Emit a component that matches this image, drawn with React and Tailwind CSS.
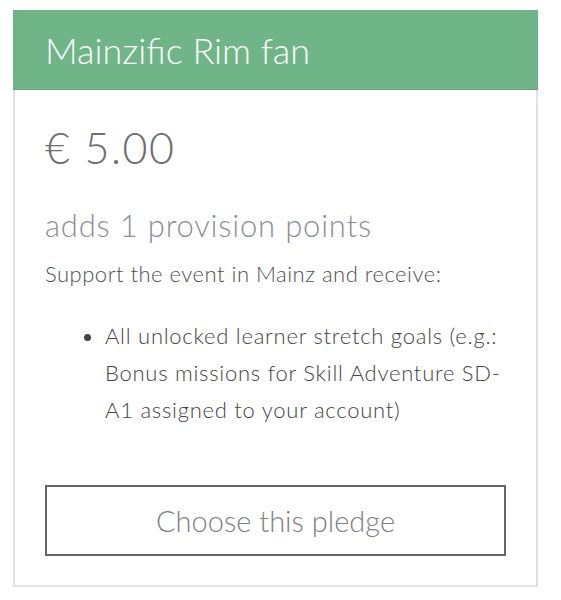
import React from "react";

const perks = [
  "All unlocked learner stretch goals (e.g.: Bonus missions for Skill Adventure SD-A1 assigned to your account)",
];

const PledgeCard = ({ title, price, points, intro, items }) => {
  return (
    <div className="w-[525px] border-2 border-[#e2e2e2] bg-white">
      <div className="-mx-[2px] -mt-[2px] h-[80px] flex items-center bg-[#6fb587] border-b border-[#62a57a] px-[32px]">
        <h2 className="text-[36px] leading-none font-light text-white">{title}</h2>
      </div>
      <div className="px-[30px] pt-[33px] pb-[29px]">
        <div className="text-[43px] leading-[50px] tracking-[1.5px] font-light text-[#6e6e6e]">{price}</div>
        <div className="mt-[32px] text-[31px] leading-[40px] tracking-[0.8px] font-light text-[#8b8f95]">
          {points}
        </div>
        <p className="mt-[14px] text-[22px] leading-[30px] tracking-[0.5px] font-light text-[#505050]">
          {intro}
        </p>
        <ul className="mt-[28px] list-disc pl-[60px] text-[22px] leading-[37px] tracking-[0.75px] font-light text-[#444]">
          {items.map((item) => (
            <li key={item}>{item}</li>
          ))}
        </ul>
        <button
          type="button"
          className="mt-[57px] w-full h-[71px] border-2 border-[#666] text-[29px] font-light text-[#808080] bg-white"
        >
          Choose this pledge
        </button>
      </div>
    </div>
  );
};

export default function App() {
  return (
    <div className="min-h-[600px] bg-white pt-[10px] pl-[13px]" style={{ fontFamily: "Lato, 'Open Sans', sans-serif" }}>
      <PledgeCard
        title="Mainzific Rim fan"
        price="€ 5.00"
        points="adds 1 provision points"
        intro="Support the event in Mainz and receive:"
        items={perks}
      />
    </div>
  );
}
